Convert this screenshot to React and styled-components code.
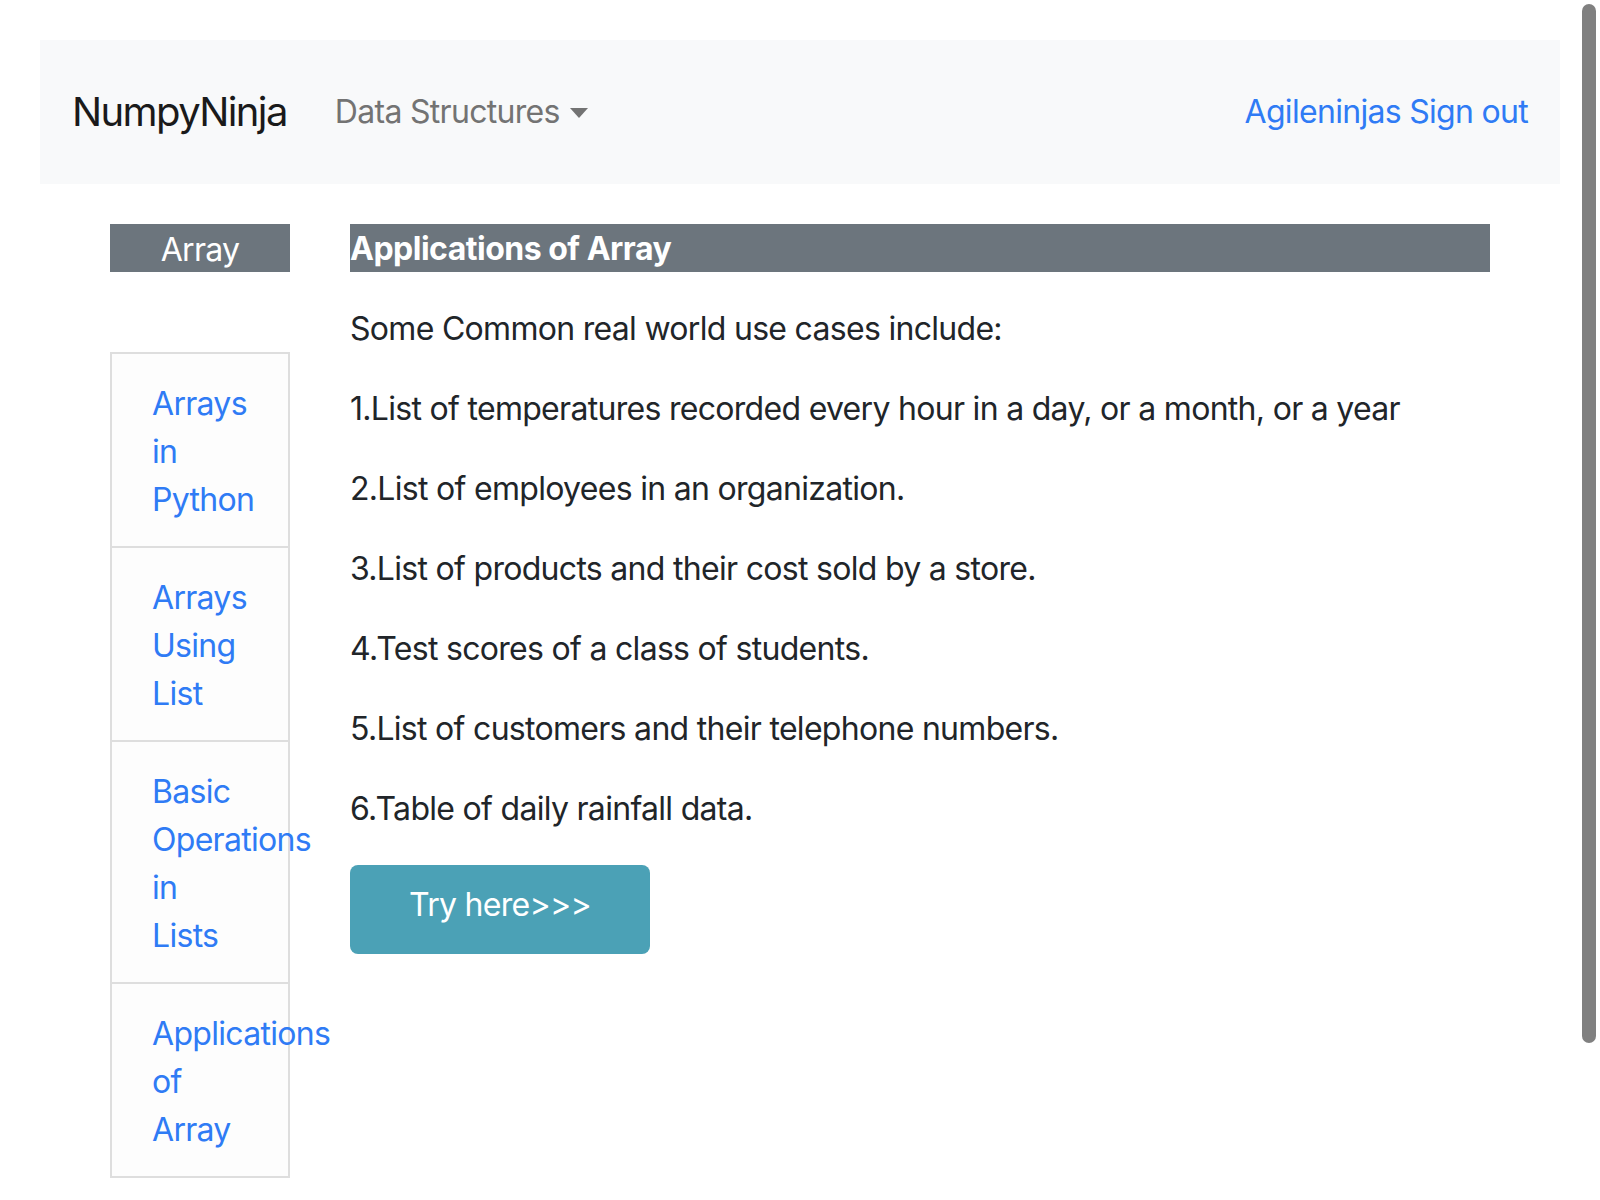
import React from 'react'
import styled, { createGlobalStyle } from 'styled-components';

const GlobalStyle = createGlobalStyle`
  html, body {
    margin: 0;
    padding: 0;
    background: #fff;
  }
  body {
    font-family: Inter, "Noto Sans", "Liberation Sans", sans-serif;
    color: #212529;
    font-size: 32px;
    line-height: 48px;
    letter-spacing: -0.7px;
  }
  * { box-sizing: border-box; }
`;

const Page = styled.div`
  padding: 40px;
  min-height: 1200px;
`;

const Navbar = styled.nav`
  height: 144px;
  background: #f8f9fa;
  display: flex;
  align-items: center;
  padding: 0 32px 0 32px;
`;

const Brand = styled.a`
  font-size: 40px;
  letter-spacing: -1.6px;
  color: #1a1a1a;
  text-decoration: none;
  margin-right: 48px;
`;

const NavItem = styled.a`
  display: flex;
  align-items: center;
  gap: 10px;
  color: #737373;
  text-decoration: none;
`;

const Caret = styled.span`
  width: 0;
  height: 0;
  border-left: 9px solid transparent;
  border-right: 9px solid transparent;
  border-top: 10px solid #737373;
  margin-top: 2px;
`;

const NavRight = styled.a`
  margin-left: auto;
  color: #2f7bf5;
  text-decoration: none;
`;

const Content = styled.div`
  display: flex;
  gap: 60px;
  padding: 40px 0 0 70px;
`;

const Sidebar = styled.aside`
  width: 180px;
  flex-shrink: 0;
`;

const SideHeader = styled.div`
  height: 48px;
  background: #6c757d;
  color: #fff;
  text-align: center;
  padding-top: 2px;
`;

const List = styled.ul`
  list-style: none;
  margin: 80px 0 0;
  padding: 0;
  border: 2px solid #dedede;
  border-bottom: none;
`;

const ListItem = styled.li`
  padding: 26px 0 22px 40px;
  border-bottom: 2px solid #dedede;
  background: #fdfdfd;
  word-spacing: 200px;
`;

const SideLink = styled.a`
  color: #2f7bf5;
  text-decoration: none;
`;

const Main = styled.main`
  width: 1140px;
`;

const Heading = styled.h2`
  margin: 0 0 33px;
  height: 48px;
  background: #6c757d;
  color: #fff;
  font-size: 32px;
  font-weight: 700;
  line-height: 50px;
  letter-spacing: -0.5px;
`;

const Para = styled.p`
  margin: 0 0 32px;
`;

const TryButton = styled.a`
  display: inline-flex;
  align-items: center;
  justify-content: center;
  width: 300px;
  height: 89px;
  padding-bottom: 10px;
  background: #4ba1b6;
  color: #fff;
  border-radius: 8px;
  text-decoration: none;
`;

const ScrollThumb = styled.div`
  position: fixed;
  top: 4px;
  right: 4px;
  width: 14px;
  height: 1039px;
  border-radius: 7px;
  background: #808080;
`;

const topics = [
  'Arrays in Python',
  'Arrays Using List',
  'Basic Operations in Lists',
  'Applications of Array',
];

const uses = [
  'Some Common real world use cases include:',
  '1.List of temperatures recorded every hour in a day, or a month, or a year',
  '2.List of employees in an organization.',
  '3.List of products and their cost sold by a store.',
  '4.Test scores of a class of students.',
  '5.List of customers and their telephone numbers.',
  '6.Table of daily rainfall data.',
];

const App = () => {
  return (
    <>
      <GlobalStyle />
      <Page>
        <Navbar>
          <Brand href="#">NumpyNinja</Brand>
          <NavItem href="#">
            Data Structures
            <Caret />
          </NavItem>
          <NavRight href="#">Agileninjas Sign out</NavRight>
        </Navbar>
        <Content>
          <Sidebar>
            <SideHeader>Array</SideHeader>
            <List>
              {topics.map((t) => (
                <ListItem key={t}>
                  <SideLink href="#">{t}</SideLink>
                </ListItem>
              ))}
            </List>
          </Sidebar>
          <Main>
            <Heading>Applications of Array</Heading>
            {uses.map((u) => (
              <Para key={u}>{u}</Para>
            ))}
            <TryButton href="#">Try here&gt;&gt;&gt;</TryButton>
          </Main>
        </Content>
      </Page>
      <ScrollThumb />
    </>
  )
}

export default App
